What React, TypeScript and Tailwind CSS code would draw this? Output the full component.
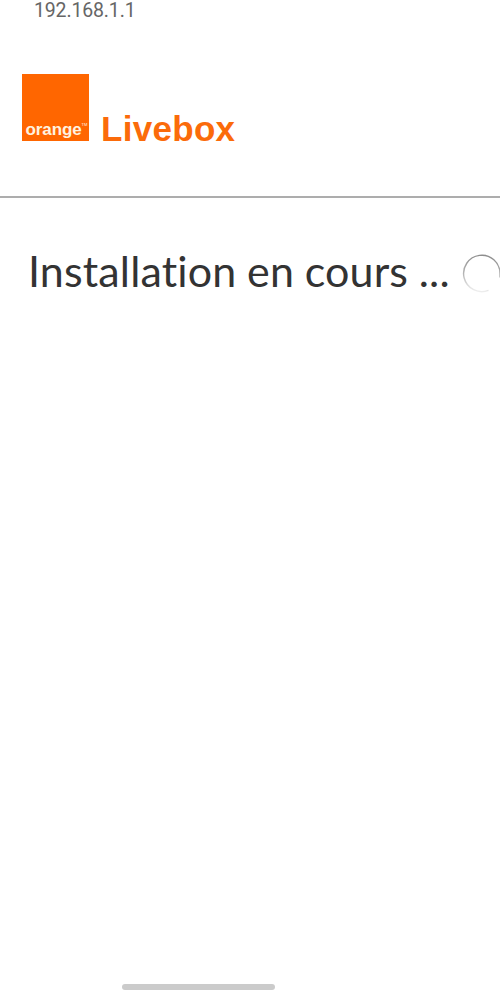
import React from "react";

const Logo: React.FC = () => {
  return (
    <div className="flex items-end pl-[22px] text-[#fb6b0a]">
      <div className="flex h-[67px] w-[67px] items-end bg-[#ff6600] pl-[3.5px] font-['Liberation_Sans',sans-serif] text-[#fff3e0]">
        <span className="text-[17px] font-bold leading-[22px] tracking-[-0.1px]">orange</span>
        <span className="mb-[13px] text-[4px] leading-[6px]">TM</span>
      </div>
      <h1 className="-mb-[8px] ml-[12px] font-['Liberation_Sans',sans-serif] text-[35px] font-bold leading-[40px] tracking-[0.3px]">Livebox</h1>
    </div>
  );
};

const Spinner: React.FC = () => {
  return (
    <svg className="h-10 w-10 shrink-0" viewBox="0 0 40 40" fill="none">
      <defs>
        <linearGradient id="fade" x1="24" y1="1" x2="20" y2="39" gradientUnits="userSpaceOnUse">
          <stop offset="0" stopColor="#8c8c8c" />
          <stop offset="0.55" stopColor="#b5b5b5" />
          <stop offset="1" stopColor="#f2f2f2" />
        </linearGradient>
      </defs>
      <path d="M26.5 36.4A18.2 18.2 0 1 1 38 19.5v4" stroke="url(#fade)" strokeWidth="1.4" />
    </svg>
  );
};

const App: React.FC = () => {
  return (
    <div className="flex h-[998px] w-[500px] flex-col overflow-hidden bg-white font-['Lato',sans-serif]">
      <p className="h-[74px] pl-[34px] font-['Roboto',sans-serif] text-[19.5px] leading-[21px] tracking-[-0.15px] text-[#666666]">192.168.1.1</p>

      <header className="h-[122px] shrink-0">
        <Logo />
      </header>
      <div className="h-[2px] shrink-0 bg-[#adadad]" />

      <main className="flex grow items-start pt-[56px] pl-[28px]">
        <h2 className="-mt-px w-[434px] shrink-0 whitespace-nowrap text-[43px] leading-[36px] tracking-[0.15px] [font-variant-ligatures:none] [word-spacing:-0.5px] text-[#333333]">
          Installation en cours ...
        </h2>
        <Spinner />
      </main>

      <footer className="flex h-[14px] shrink-0 pl-[122px]">
        <div className="h-[6px] w-[153px] rounded-full bg-[#cbcbcb]" />
      </footer>
    </div>
  );
};

export default App;
